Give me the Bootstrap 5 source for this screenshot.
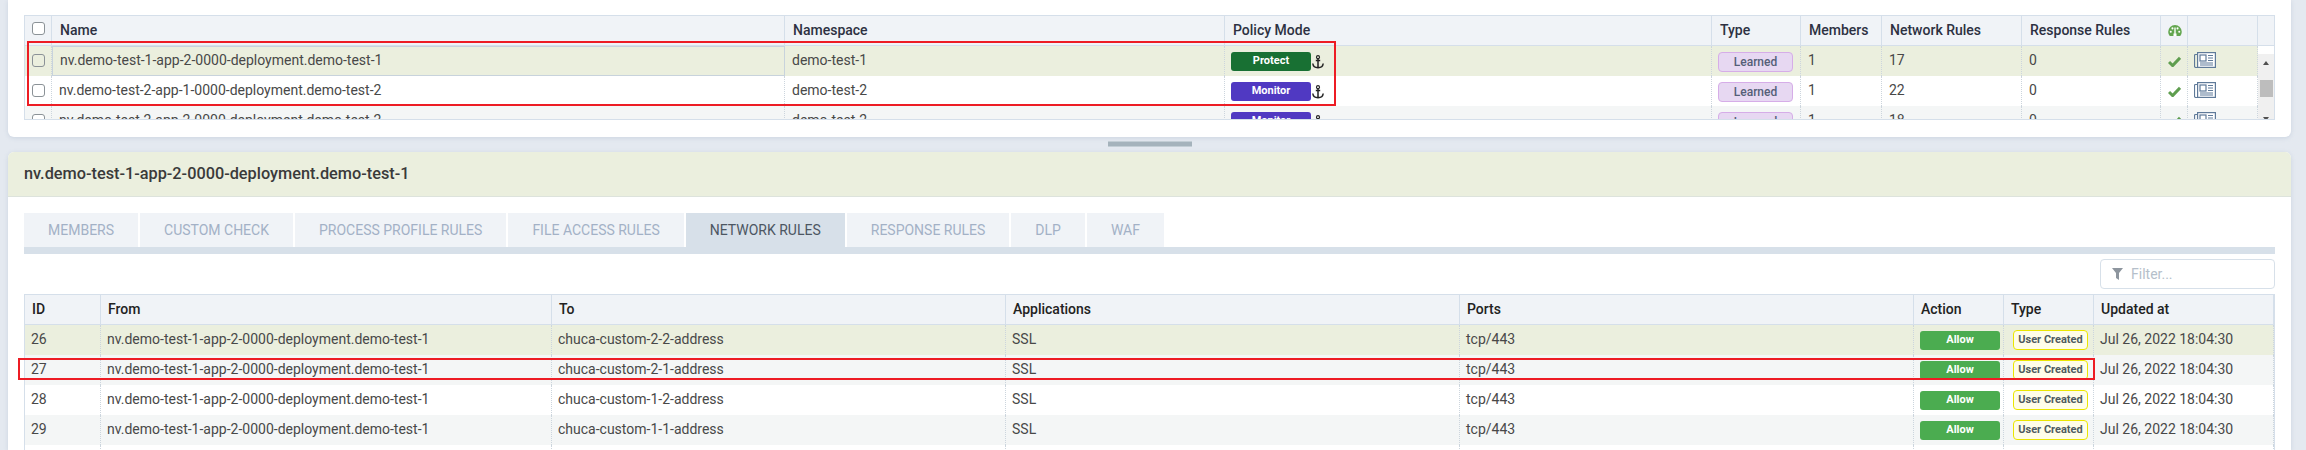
<!DOCTYPE html>
<html lang="en">
<head>
<meta charset="utf-8">
<title>Network rules</title>
<link href="https://cdn.jsdelivr.net/npm/bootstrap@5.3.0/dist/css/bootstrap.min.css" rel="stylesheet">
<style>
html,body{height:450px;overflow:hidden}
body{background:#e4e9f0;font-family:Roboto,"Liberation Sans",sans-serif;font-size:14px;font-weight:400;color:#484848;position:relative}
.panel-top{margin:0 15px 0 8px;height:137px;background:#fff;border-radius:0 0 6px 6px;padding:15px 16px 0;box-shadow:0 1px 4px rgba(130,150,180,.25)}
.split{height:15px;margin:0 15px 0 8px;display:flex;justify-content:center;padding-top:4px}
.split i{display:block;width:84px;height:6px;background:#a5b3bc;border-top:1px solid #c3ced5;border-bottom:1px solid #c3ced5}
.panel-main{margin:0 15px 0 8px;background:#fff;border-radius:6px 6px 0 0;height:298px;overflow:hidden;box-shadow:0 1px 4px rgba(130,150,180,.25)}
.panel-head{height:45px;background:#ebefde;border-bottom:1px solid #dde3dc;padding:0 16px;display:flex;align-items:center;font-size:16.3px;font-weight:500;color:#3a3a3a}
.tabs-wrap{margin:16px 16px 0;border-bottom:7px solid #d7e0e9;gap:2px}
.tab-x{height:34px;padding:0 24px;background:#f0f3f7;color:#a3b1c6;display:flex;align-items:center;white-space:nowrap;font-size:14px;text-transform:uppercase}
.tab-x.on{background:#d7e0e9;color:#4c5662}
.filter-row{margin:5px 16px 0;justify-content:flex-end;height:35px}
.filter-box{width:175px;height:30px;border:1px solid #d7e0e9;border-radius:4px;display:flex;align-items:center;padding-left:11px;gap:8px;color:#b5bfca;font-size:14px}
.grid-x{display:grid;border:1px solid #d5dfea;margin:0 16px;overflow:hidden}
.top-grid{grid-template-columns:27px 733px 440px 487px 89px 81px 140px 139px 27px 70px 16px;height:105px;grid-auto-rows:30px;margin:0}
.rule-grid{grid-template-columns:76px 451px 454px 454px 454px 90px 90px 1fr;grid-auto-rows:30px;height:160px;border-bottom:0}
.hc,.dc{display:flex;align-items:center;white-space:nowrap;overflow:hidden}
.hc{padding:0 8px;background:#f0f3f7;border-right:1px solid #d5dfea;border-bottom:1px solid #d5dfea;font-weight:500;color:#2d3142}
.dc{padding:0 7px 2px;border-right:1px dotted #ccd5dd}
.rule-grid .hc{padding:0 7px;color:#222}
.rule-grid .dc{padding:0 6px 2px}
.hc:last-child{border-right:0}
.tint{background:#ebefde}.alt{background:#f4f6f6}.plain{background:#fff}
.tick{width:13px;height:13px;border:1px solid #8b9297;border-radius:3px;background:#fff;display:block;flex-shrink:0}
.tint .tick{background:#ebefde}
.top-grid .hc.cb{padding:0 6.5px 4px}
.top-grid .dc.cb{padding:0 6.5px 2px}
.sel-name{border:1px solid #c8d3dc}
.pill{width:80px;height:19px;border-radius:3px;display:flex;align-items:center;justify-content:center;font-size:11px;font-weight:700;color:#fff;flex:none}
.pill-protect{background:#187033}.pill-monitor{background:#5039c2}.pill-allow{background:#4bac50}
.pill-learned{width:75px;height:20px;border-radius:4px;background:#e7d8f2;border:1px solid #d6ade8;color:#555f78;font-weight:500;font-size:12px}
.pill-user{width:75px;height:20px;border-radius:4px;background:#fffde8;border:1px solid #ebe600;color:#4f5a5e;font-weight:700;font-size:11px}
.top-grid .dc.badge-cell{padding:1px 0 0 6px}
.rule-grid .dc.allow-cell{padding:1px 0 0 6px}
.rule-grid .dc.user-cell{padding:0 0 0 9px}
.anch{margin-left:1px;flex-shrink:0}
.top-grid .hc.gauge-cell{padding:0 0 0 7px}
.top-grid .dc.ok-cell{padding:0 0 0 7px}
.top-grid .dc.doc-cell{padding:0 0 2px 6px}
.gauge-ico{width:14px;height:11px;flex-shrink:0}
.scroll-col{grid-column:11;grid-row:2 / span 3}
.top-grid .dc.scroll-col{padding:0;border:0}
.bar-x{background:#f0f0f0;width:100%;height:75px;position:relative}
.bar-x b{display:block;position:absolute;left:2px;top:26px;width:13px;height:17px;background:#bdbdbd}
.arr-u,.arr-d{position:absolute;left:5px;width:0;height:0;border-left:3.5px solid transparent;border-right:3.5px solid transparent}
.arr-u{top:7px;border-bottom:4px solid #505050}.arr-d{top:63px;border-top:4px solid #505050}
.mark-a{position:absolute;border:2px solid #ed1c24;pointer-events:none}
.m1{left:27px;top:41px;width:1309px;height:65px}
.m2{left:18px;top:358px;width:2077px;height:22px}
</style>
</head>
<body>
<svg width="0" height="0" class="position-absolute">
<defs>
<symbol id="i-check" viewBox="0 0 14 12"><path d="M1 6.500l4 4L13 2" fill="none" stroke="#5f9e4f" stroke-width="3.200"/></symbol>
<symbol id="i-news" viewBox="0 0 22 16"><rect x="3.600" y=".6" width="17.800" height="14.800" fill="#fff" stroke="#5f7a99" stroke-width="1.200"/><path d="M3.500 2.500H1.500a1 1 0 0 0-1 1v10.500a1.500 1.500 0 0 0 1.500 1.500h2" fill="none" stroke="#5f7a99" stroke-width="1.200"/><rect x="6" y="3" width="6" height="6" fill="none" stroke="#5f7a99" stroke-width="1.200"/><path d="M14 3.500h5M14 6h5M14 8.500h5M6 11h13M6 13h13" stroke="#5f7a99" stroke-width="1.200"/></symbol>
<symbol id="i-anchor" viewBox="0 0 12 14"><circle cx="6" cy="2.200" r="1.500" fill="none" stroke="#222" stroke-width="1.200"/><path d="M6 3.500V12.800M3.800 5.500h4.400M.8 8.500c.3 2.800 2.600 4.200 5.200 4.200s4.900-1.400 5.200-4.200" fill="none" stroke="#222" stroke-width="1.500"/></symbol>
</defs>
</svg>

<div class="panel-top">
  <div class="grid-x top-grid">
    <div class="hc cb"><span class="tick"></span></div><div class="hc">Name</div><div class="hc">Namespace</div><div class="hc">Policy Mode</div><div class="hc">Type</div><div class="hc">Members</div><div class="hc">Network Rules</div><div class="hc">Response Rules</div>
    <div class="hc gauge-cell"><svg class="gauge-ico" viewBox="0 0 16 13"><path d="M8 0a8 8 0 0 0-8 8c0 2 .7 3.700 1.800 5h12.400A8 8 0 0 0 16 8a8 8 0 0 0-8-8z" fill="#63a64f"/><circle cx="3" cy="8" r="1.200" fill="#fff"/><circle cx="5" cy="4" r="1.200" fill="#fff"/><circle cx="11" cy="4" r="1.200" fill="#fff"/><circle cx="13" cy="8" r="1.200" fill="#fff"/><path d="M7.200 3h1.600v7h1v3H6.200v-3h1z" fill="#fff"/></svg></div><div class="hc"></div><div class="hc"></div>

    <div class="dc cb tint"><span class="tick"></span></div><div class="dc tint sel-name">nv.demo-test-1-app-2-0000-deployment.demo-test-1</div><div class="dc tint">demo-test-1</div><div class="dc tint badge-cell"><span class="pill pill-protect">Protect</span><svg width="12" height="14" class="anch"><use href="#i-anchor"/></svg></div><div class="dc tint badge-cell"><span class="pill pill-learned">Learned</span></div><div class="dc tint">1</div><div class="dc tint">17</div><div class="dc tint">0</div><div class="dc tint ok-cell"><svg width="13" height="11"><use href="#i-check"/></svg></div><div class="dc tint doc-cell"><svg width="22" height="16"><use href="#i-news"/></svg></div>
    <div class="dc scroll-col"><div class="bar-x"><span class="arr-u"></span><b></b><span class="arr-d"></span></div></div>

    <div class="dc cb plain"><span class="tick"></span></div><div class="dc plain">nv.demo-test-2-app-1-0000-deployment.demo-test-2</div><div class="dc plain">demo-test-2</div><div class="dc plain badge-cell"><span class="pill pill-monitor">Monitor</span><svg width="12" height="14" class="anch"><use href="#i-anchor"/></svg></div><div class="dc plain badge-cell"><span class="pill pill-learned">Learned</span></div><div class="dc plain">1</div><div class="dc plain">22</div><div class="dc plain">0</div><div class="dc plain ok-cell"><svg width="13" height="11"><use href="#i-check"/></svg></div><div class="dc plain doc-cell"><svg width="22" height="16"><use href="#i-news"/></svg></div>

    <div class="dc cb alt"><span class="tick"></span></div><div class="dc alt">nv.demo-test-2-app-2-0000-deployment.demo-test-2</div><div class="dc alt">demo-test-2</div><div class="dc alt badge-cell"><span class="pill pill-monitor">Monitor</span><svg width="12" height="14" class="anch"><use href="#i-anchor"/></svg></div><div class="dc alt badge-cell"><span class="pill pill-learned">Learned</span></div><div class="dc alt">1</div><div class="dc alt">18</div><div class="dc alt">0</div><div class="dc alt ok-cell"><svg width="13" height="11"><use href="#i-check"/></svg></div><div class="dc alt doc-cell"><svg width="22" height="16"><use href="#i-news"/></svg></div>
  </div>
</div>

<div class="split"><i></i></div>

<div class="panel-main">
  <div class="panel-head">nv.demo-test-1-app-2-0000-deployment.demo-test-1</div>
  <div class="tabs-wrap d-flex">
    <div class="tab-x">Members</div><div class="tab-x">Custom Check</div><div class="tab-x">Process Profile Rules</div><div class="tab-x">File Access Rules</div><div class="tab-x on">Network Rules</div><div class="tab-x">Response Rules</div><div class="tab-x">DLP</div><div class="tab-x">WAF</div>
  </div>
  <div class="filter-row d-flex">
    <div class="filter-box"><svg width="11" height="12" viewBox="0 0 11 12"><path d="M0 0h11L7 5v7L4 10V5z" fill="#8d959e"/></svg><span>Filter...</span></div>
  </div>
  <div class="grid-x rule-grid">
    <div class="hc">ID</div><div class="hc">From</div><div class="hc">To</div><div class="hc">Applications</div><div class="hc">Ports</div><div class="hc">Action</div><div class="hc">Type</div><div class="hc">Updated at</div>

    <div class="dc tint">26</div><div class="dc tint">nv.demo-test-1-app-2-0000-deployment.demo-test-1</div><div class="dc tint">chuca-custom-2-2-address</div><div class="dc tint">SSL</div><div class="dc tint">tcp/443</div><div class="dc tint allow-cell"><span class="pill pill-allow">Allow</span></div><div class="dc tint user-cell"><span class="pill pill-user">User Created</span></div><div class="dc tint">Jul 26, 2022 18:04:30</div>
    <div class="dc alt">27</div><div class="dc alt">nv.demo-test-1-app-2-0000-deployment.demo-test-1</div><div class="dc alt">chuca-custom-2-1-address</div><div class="dc alt">SSL</div><div class="dc alt">tcp/443</div><div class="dc alt allow-cell"><span class="pill pill-allow">Allow</span></div><div class="dc alt user-cell"><span class="pill pill-user">User Created</span></div><div class="dc alt">Jul 26, 2022 18:04:30</div>
    <div class="dc plain">28</div><div class="dc plain">nv.demo-test-1-app-2-0000-deployment.demo-test-1</div><div class="dc plain">chuca-custom-1-2-address</div><div class="dc plain">SSL</div><div class="dc plain">tcp/443</div><div class="dc plain allow-cell"><span class="pill pill-allow">Allow</span></div><div class="dc plain user-cell"><span class="pill pill-user">User Created</span></div><div class="dc plain">Jul 26, 2022 18:04:30</div>
    <div class="dc alt">29</div><div class="dc alt">nv.demo-test-1-app-2-0000-deployment.demo-test-1</div><div class="dc alt">chuca-custom-1-1-address</div><div class="dc alt">SSL</div><div class="dc alt">tcp/443</div><div class="dc alt allow-cell"><span class="pill pill-allow">Allow</span></div><div class="dc alt user-cell"><span class="pill pill-user">User Created</span></div><div class="dc alt">Jul 26, 2022 18:04:30</div>
    <div class="dc plain"></div><div class="dc plain"></div><div class="dc plain"></div><div class="dc plain"></div><div class="dc plain"></div><div class="dc plain"></div><div class="dc plain"></div><div class="dc plain"></div>
  </div>
</div>

<div class="mark-a m1"></div>
<div class="mark-a m2"></div>
<script src="https://cdn.jsdelivr.net/npm/bootstrap@5.3.0/dist/js/bootstrap.bundle.min.js"></script>
</body>
</html>
